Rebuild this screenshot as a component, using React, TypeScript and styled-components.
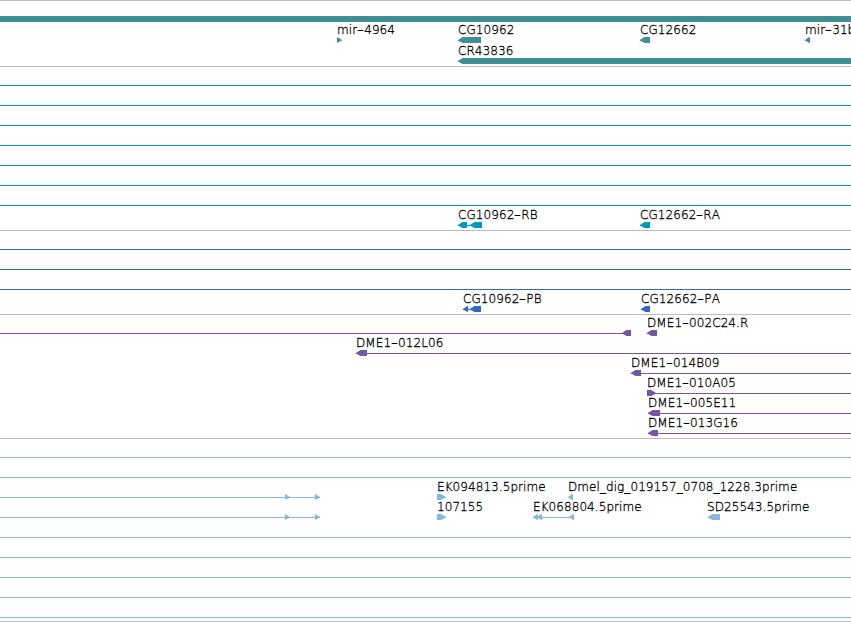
import { Fragment } from "react"
import styled, { createGlobalStyle } from "styled-components"

type Direction = "left" | "right" | "none"

// start, end (px along the region) and the strand it points to
type Block = [number, number, Direction]

interface FeatureData {
    label?: string
    labelOffset?: number
    start: number
    end: number
    blocks?: Block[]
}

interface TrackData {
    name: string
    color: string
    lanes: FeatureData[][]
}

const REGION_WIDTH = 851

const span: FeatureData = { start: 0, end: REGION_WIDTH }
const estPair: FeatureData = {
    start: 0,
    end: 320,
    blocks: [
        [285, 290, "right"],
        [315, 320, "right"],
    ],
}

const tracks: TrackData[] = [
    {
        name: "genes",
        color: "#3f8f95",
        lanes: [
            [{ ...span, blocks: [[0, REGION_WIDTH, "none"]] }],
            [
                { label: "mir-4964", start: 337, end: 342, blocks: [[337, 342, "right"]] },
                { label: "CG10962", start: 458, end: 481, blocks: [[458, 481, "left"]] },
                { label: "CG12662", start: 640, end: 650, blocks: [[640, 650, "left"]] },
                { label: "mir-31b", start: 805, end: 810, blocks: [[805, 810, "left"]] },
            ],
            [
                {
                    label: "CR43836",
                    start: 458,
                    end: REGION_WIDTH,
                    blocks: [[458, REGION_WIDTH, "left"]],
                },
            ],
        ],
    },
    {
        name: "transcripts",
        color: "#009abc",
        lanes: [
            ...Array.from({ length: 7 }, () => [span]),
            [
                {
                    label: "CG10962-RB",
                    start: 458,
                    end: 482,
                    blocks: [
                        [458, 467, "left"],
                        [470, 482, "left"],
                    ],
                },
                { label: "CG12662-RA", start: 640, end: 650, blocks: [[640, 650, "left"]] },
            ],
        ],
    },
    {
        name: "cds",
        color: "#3169c6",
        lanes: [
            ...Array.from({ length: 3 }, () => [span]),
            [
                {
                    label: "CG10962-PB",
                    start: 463,
                    end: 481,
                    blocks: [
                        [463, 468, "left"],
                        [470, 481, "left"],
                    ],
                },
                { label: "CG12662-PA", start: 641, end: 650, blocks: [[641, 650, "left"]] },
            ],
        ],
    },
    {
        name: "clones",
        color: "#7357a5",
        lanes: [
            [
                { start: 0, end: 631, blocks: [[622, 631, "left"]] },
                { label: "DME1-002C24.R", start: 647, end: 657, blocks: [[647, 657, "left"]] },
            ],
            [{ label: "DME1-012L06", start: 356, end: REGION_WIDTH, blocks: [[356, 367, "left"]] }],
            [{ label: "DME1-014B09", start: 631, end: REGION_WIDTH, blocks: [[631, 641, "left"]] }],
            [{ label: "DME1-010A05", start: 647, end: REGION_WIDTH, blocks: [[647, 656, "right"]] }],
            [{ label: "DME1-005E11", start: 648, end: REGION_WIDTH, blocks: [[648, 660, "left"]] }],
            [{ label: "DME1-013G16", start: 648, end: REGION_WIDTH, blocks: [[648, 658, "left"]] }],
        ],
    },
    {
        name: "est",
        color: "#84b9dc",
        lanes: [
            [span],
            [span],
            [
                estPair,
                { label: "EK094813.5prime", start: 437, end: 446, blocks: [[437, 446, "right"]] },
                {
                    label: "Dmel_dig_019157_0708_1228.3prime",
                    start: 568,
                    end: 573,
                    blocks: [[568, 573, "left"]],
                },
            ],
            [
                estPair,
                { label: "107155", start: 437, end: 446, blocks: [[437, 446, "right"]] },
                {
                    label: "EK068804.5prime",
                    start: 533,
                    end: 574,
                    blocks: [
                        [533, 538, "left"],
                        [537, 542, "left"],
                        [569, 574, "left"],
                    ],
                },
                {
                    label: "SD25543.5prime",
                    labelOffset: -1,
                    start: 708,
                    end: 720,
                    blocks: [[708, 720, "left"]],
                },
            ],
            ...Array.from({ length: 5 }, () => [span]),
        ],
    },
]

function blockPoints([start, end, direction]: Block, origin: number) {
    const a = start - origin
    const b = end - origin
    if (direction === "left") {
        return `${a - 0.5},3.2 ${a + 4.5},0 ${b},0 ${b},6 ${a + 4.5},6`
    }
    if (direction === "right") {
        const shoulder = Math.max(a, b - 5)
        return `${a},0 ${shoulder},0 ${b + 0.5},3.2 ${shoulder},6 ${a},6`
    }
    return `${a},0 ${b},0 ${b},6 ${a},6`
}

function Feature({ label = "", labelOffset = 0, start, end, blocks = [] }: FeatureData) {
    return (
        <FeatureBox $start={start}>
            <Label $offset={labelOffset}>
                {label.split("-").map((part, index) => (
                    <Fragment key={index}>
                        {index > 0 && <Dash>-</Dash>}
                        {part}
                    </Fragment>
                ))}
            </Label>
            <Glyph width={end - start} height={6}>
                {end - start > 5 && <rect y={3} width={end - start} height={1} />}
                {blocks.map((block, index) => (
                    <polygon key={index} points={blockPoints(block, start)} />
                ))}
            </Glyph>
        </FeatureBox>
    )
}

export default function App() {
    return (
        <Browser>
            <GlobalStyle />
            {tracks.map((track) => (
                <Track
                    key={track.name}
                    $color={track.color}
                    $laneHeight={track.name === "genes" ? 21 : 20}
                >
                    {track.lanes.map((lane, index) => (
                        <Lane key={index}>
                            {lane.map((feature) => (
                                <Feature key={feature.start} {...feature} />
                            ))}
                        </Lane>
                    ))}
                </Track>
            ))}
        </Browser>
    )
}

const GlobalStyle = createGlobalStyle`
    body {
        margin: 0;
        background-color: #ffffff;
        overflow: hidden;
    }
`

const Browser = styled.main`
    box-sizing: border-box;
    width: ${REGION_WIDTH}px;
    height: 622px;
    overflow: hidden;
    border-bottom: 1px solid #bebebe;
    font-family: "DejaVu Sans", sans-serif;
    font-size: 12px;
    font-weight: 200;
    font-kerning: none;
    letter-spacing: 0.07px;
    color: #000000;
    -webkit-text-stroke: 0.3px #000000;
`
const Track = styled.section<{ $color: string; $laneHeight: number }>`
    display: grid;
    grid-auto-rows: ${({ $laneHeight }) => $laneHeight}px;
    padding-top: ${({ $laneHeight }) => 21 - $laneHeight}px;
    padding-bottom: 2px;
    border-top: 1px solid #bebebe;
    fill: ${({ $color }) => $color};
`
// every feature of a lane shares the one cell and starts at its own offset
const Lane = styled.div`
    display: grid;
    grid-template-columns: ${REGION_WIDTH}px;
    overflow: hidden;
`
const FeatureBox = styled.div<{ $start: number }>`
    grid-area: 1 / 1;
    display: flex;
    flex-direction: column;
    justify-content: flex-end;
    margin-left: ${({ $start }) => $start}px;
`
const Label = styled.span<{ $offset: number }>`
    height: 14px;
    margin-left: ${({ $offset }) => $offset}px;
    line-height: 14px;
    white-space: nowrap;
`
const Dash = styled.span`
    display: inline-block;
    width: 7px;
    text-align: center;
    transform: scaleX(1.6);
`
const Glyph = styled.svg`
    display: block;
    flex: none;
    overflow: visible;
`
